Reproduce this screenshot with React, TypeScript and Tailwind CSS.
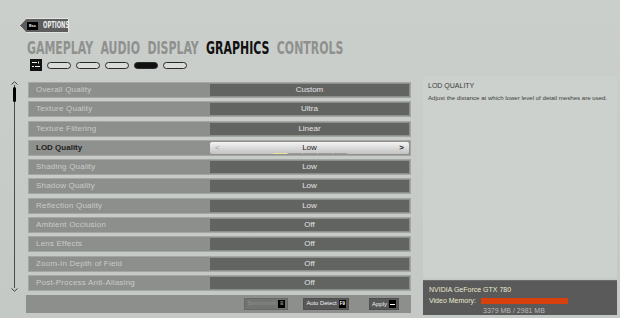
import React from "react";

const rows: { label: string; value: string }[] = [
  { label: "Overall Quality", value: "Custom" },
  { label: "Texture Quality", value: "Ultra" },
  { label: "Texture Filtering", value: "Linear" },
  { label: "LOD Quality", value: "Low" },
  { label: "Shading Quality", value: "Low" },
  { label: "Shadow Quality", value: "Low" },
  { label: "Reflection Quality", value: "Low" },
  { label: "Ambient Occlusion", value: "Off" },
  { label: "Lens Effects", value: "Off" },
  { label: "Zoom-In Depth of Field", value: "Off" },
  { label: "Post-Process Anti-Aliasing", value: "Off" },
];

const tabs = ["GAMEPLAY", "AUDIO", "DISPLAY", "GRAPHICS", "CONTROLS"];

function EscTag() {
  return (
    <div className="relative flex items-center h-[15px] w-[50px] pl-[8px]">
      <svg className="absolute inset-0" width="50" height="15" viewBox="0 0 50 15" aria-hidden="true">
        <polygon points="0.5,7.5 7,0.5 49.5,0.5 49.5,14.5 7,14.5" fill="#5c5d5c" stroke="#e2e4e2" strokeWidth="1" />
      </svg>
      <span className="relative flex items-center justify-center w-[11px] h-[8px] bg-black text-[4px] leading-none text-white font-bold">Esc</span>
      <span className="relative ml-[5px] w-[24px] origin-left scale-x-[0.72] whitespace-nowrap text-[8px] leading-none text-[#f0f0f0] font-['DejaVu_Sans_Condensed',sans-serif] font-bold">
        OPTIONS
      </span>
    </div>
  );
}

function Row({ label, value }: { label: string; value: string }) {
  return (
    <div className="flex h-[16px] border border-[#a4a6a4] bg-[#8d8f8d]">
      <div className="flex-1 pl-[7px] flex items-center text-[8px] text-[#c9cbc9] tracking-[0.2px]">{label}</div>
      <div className="w-[199px] my-[1px] mr-[1px] bg-[#626462] flex items-center justify-center text-[8px] text-[#e2e2e2]">
        {value}
      </div>
    </div>
  );
}

function ActiveRow({ label, value }: { label: string; value: string }) {
  return (
    <div className="flex h-[16px] border border-[#a4a6a4] bg-[#8f918f]">
      <div className="flex-1 pl-[7px] flex items-center text-[8px] font-bold text-[#1e1e1e]">{label}</div>
      <div className="w-[199px] my-[1px] mr-[1px] rounded-[2px] bg-gradient-to-b from-[#f4f4f4] to-[#c2c2c2] flex items-center justify-between px-[5px]">
        <span className="text-[8px] text-[#a0a0a0]">&lt;</span>
        <div className="flex flex-col items-center pt-[1px]">
          <span className="text-[8px] leading-[9px] text-[#1e1e1e]">{value}</span>
          <div className="flex gap-[1px] mt-[1px]">
            <div className="w-[14px] h-[1.5px] bg-[#efe39a]" />
            <div className="w-[14px] h-[1.5px] bg-[#9c9c9c]" />
            <div className="w-[14px] h-[1.5px] bg-[#9c9c9c]" />
            <div className="w-[14px] h-[1.5px] bg-[#9c9c9c]" />
            <div className="w-[14px] h-[1.5px] bg-[#9c9c9c]" />
          </div>
        </div>
        <span className="text-[8px] font-bold text-[#1e1e1e]">&gt;</span>
      </div>
    </div>
  );
}

function KeyBox({ children, dim }: { children: React.ReactNode; dim?: boolean }) {
  return (
    <span className={`flex items-center justify-center h-[8px] min-w-[7px] px-[1px] bg-black text-[4.5px] leading-none font-bold ${dim ? "text-[#8a8a8a]" : "text-white"}`}>
      {children}
    </span>
  );
}

export default function App() {
  return (
    <div className="w-[620px] h-[318px] overflow-hidden bg-gradient-to-b from-[#cbcfcc] to-[#c5c9c6] font-['Liberation_Sans',Arial,sans-serif] select-none">
      {/* Header */}
      <div className="flex pt-[18px] pl-[19px]">
        <EscTag />
      </div>

      {/* Tabs */}
      <div className="mt-[5px] ml-[27px] h-[20px] flex items-center origin-left scale-x-[0.676] gap-[11px] font-['DejaVu_Sans_Condensed',sans-serif] font-bold text-[18px] leading-none whitespace-nowrap">
        {tabs.map((t) => (
          <span key={t} className={t === "GRAPHICS" ? "text-[#111111]" : "text-[#8f918f]"}>
            {t}
          </span>
        ))}
      </div>

      {/* Page indicators */}
      <div className="mt-[1px] ml-[30px] flex items-center h-[12px]">
        <svg width="12" height="12" viewBox="0 0 12 12" aria-hidden="true">
          <rect width="12" height="12" fill="#111" />
          <rect x="2" y="3" width="5" height="1" fill="#f0f0f0" />
          <rect x="2" y="7" width="2" height="1" fill="#f0f0f0" />
          <rect x="5" y="7" width="5" height="1" fill="#f0f0f0" />
          <rect x="8" y="2.5" width="1" height="2" fill="#f0f0f0" />
        </svg>
        <div className="ml-[5px] flex gap-[5px]">
          {[0, 1, 2, 3, 4].map((i) => (
            <div
              key={i}
              className={`w-[24px] h-[7px] rounded-full border-[1.5px] border-[#2a2a2a] ${i === 3 ? "bg-[#111]" : "bg-[#d8dbd8]"}`}
            />
          ))}
        </div>
      </div>

      {/* Main */}
      <div className="mt-[7px] flex">
        {/* Left side */}
        <div className="w-[411px] flex flex-col">
          <div className="flex">
            {/* scrollbar */}
            <div className="w-[28px] flex flex-col pt-[2px]">
              <div className="pl-[11px] mt-[1px] flex">
                <svg width="7" height="4" viewBox="0 0 7 4" aria-hidden="true">
                  <path d="M0.5 3.5 L3.5 0.8 L6.5 3.5" fill="none" stroke="#444" strokeWidth="1" />
                </svg>
              </div>
              <div className="pl-[14px] flex h-[203px] relative">
                <div className="w-[1px] h-full bg-[#4a4a4a]" />
                <div className="absolute left-[13px] top-[2px] w-[3px] h-[15px] rounded-full bg-black" />
              </div>
              <div className="pl-[11px] flex">
                <svg width="7" height="4" viewBox="0 0 7 4" aria-hidden="true">
                  <path d="M0.5 0.5 L3.5 3.2 L6.5 0.5" fill="none" stroke="#444" strokeWidth="1" />
                </svg>
              </div>
            </div>
            {/* rows */}
            <div className="flex-1 flex flex-col gap-[3.3px] mt-[4px]">
              {rows.map((r) =>
                r.label === "LOD Quality" ? <ActiveRow key={r.label} {...r} /> : <Row key={r.label} {...r} />
              )}
            </div>
          </div>
          {/* Button bar */}
          <div className="ml-[26px] mt-[3px] h-[18px] bg-[#8d8f8d] flex items-center justify-end pr-[12px]">
            <div className="flex items-center gap-[2px] h-[12px] pl-[3px] pr-[2px] bg-[#727472] border border-[#666866]">
              <span className="text-[5.7px] leading-none text-[#8c8e8c]">Benchmark</span>
              <KeyBox dim>B</KeyBox>
            </div>
            <div className="ml-[15px] flex items-center gap-[2px] h-[12px] pl-[2px] pr-[2px] bg-[#575857] border border-[#4e4f4e]">
              <span className="text-[5.8px] leading-none text-[#f2f2f2]">Auto Detect</span>
              <KeyBox>F9</KeyBox>
            </div>
            <div className="ml-[20px] flex items-center gap-[2px] h-[12px] pl-[2px] pr-[2px] bg-[#575857] border border-[#4e4f4e]">
              <span className="text-[6px] leading-none text-[#f2f2f2]">Apply</span>
              <KeyBox>
                <span className="block w-[5px] h-[1px] bg-white" />
              </KeyBox>
            </div>
          </div>
        </div>

        {/* Right side */}
        <div className="ml-[12px] w-[194px] -mt-[2px] flex flex-col">
          <div className="h-[202px] bg-[#cdd1ce] pl-[5px] pt-[6px]">
            <div className="text-[7px] leading-none text-[#3c3c3c] uppercase">LOD Quality</div>
            <div className="mt-[6px] text-[6.1px] leading-none whitespace-nowrap text-[#3c3c3c]">
              Adjust the distance at which lower level of detail meshes are used.
            </div>
          </div>
          <div className="mt-[2px] h-[35px] bg-[#595a59] border-t border-[#6c6d6c] px-[6px] pt-[5px]">
            <div className="text-[7px] leading-none text-[#ece9cf]">NVIDIA GeForce GTX 780</div>
            <div className="mt-[4px] flex items-center">
              <span className="text-[7px] leading-none text-[#ece9cf]">Video Memory:</span>
              <div className="ml-[5px] w-[87px] h-[6px] bg-[#d8400e]" />
            </div>
            <div className="mt-[3px] pl-[54px] text-[7px] leading-none text-[#bcbcbc]">3379 MB / 2981 MB</div>
          </div>
        </div>
      </div>
    </div>
  );
}
